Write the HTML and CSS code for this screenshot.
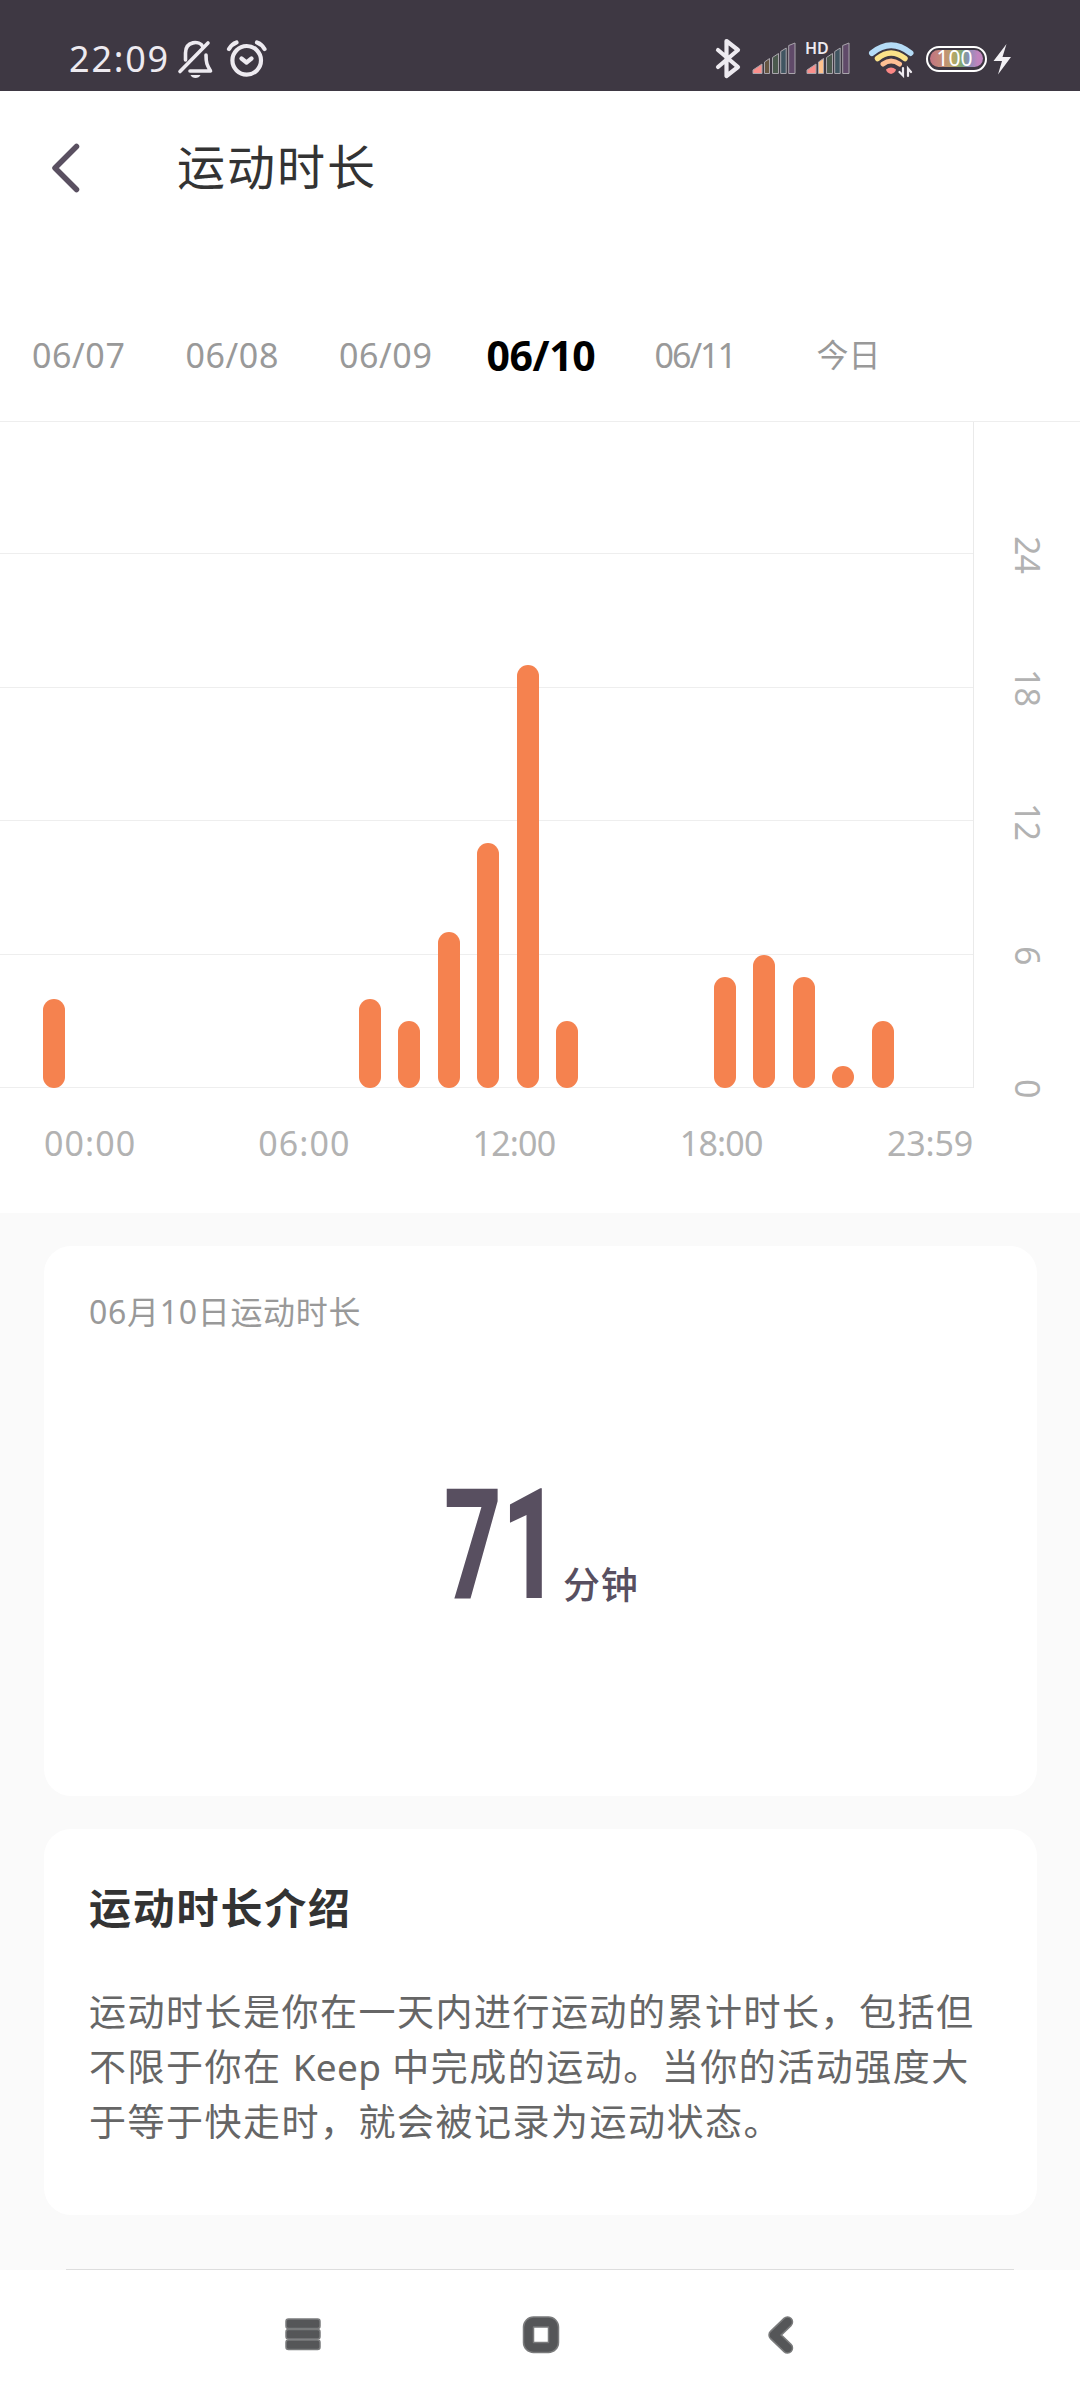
FILE: index.html
```html
<!DOCTYPE html>
<html lang="zh-CN">
<head>
<meta charset="utf-8">
<title>运动时长</title>
<link rel="stylesheet" href="styles.css">
</head>
<body>
<div class="status">
  <span class="clock">22:09</span>
  <svg class="bell" width="38" height="40" viewBox="177 39 38 40" fill="none" stroke="#edeaf0" stroke-width="3.6" stroke-linecap="round" stroke-linejoin="round">
    <path d="M185.500 60V53c0-12 14-13 17.500-6M206 55c0 8 1 10 4.500 16H190M180 71.500L208 43"/>
    <path d="M190.500 75h10c-1.500 4-8.500 4-10 0z" fill="#edeaf0" stroke="none"/>
  </svg>
  <svg class="alarm" width="42" height="40" viewBox="226 39 42 40" fill="none" stroke="#edeaf0" stroke-width="4.200" stroke-linecap="round" stroke-linejoin="round">
    <circle cx="246.700" cy="60.300" r="14.300"/>
    <path d="M241.500 58.500l5 4 5-4M229 49q3-5 7.500-6.500M264.500 49q-3-5-7.500-6.500"/>
  </svg>
  <svg class="bt" width="28" height="42" viewBox="714 38 28 42" fill="none" stroke="#edeaf0" stroke-width="4.200" stroke-linecap="round" stroke-linejoin="round">
    <path d="M718 50l20 17-11.500 9V41l11.500 9-20 17"/>
  </svg>
  <svg class="sig" width="44" height="34" viewBox="752 42 44 34" stroke="#a9a5ac" stroke-width="1">
    <path d="M753 73.500v-3.500l9-6v9.500z" fill="#fb8f8c"/>
    <path d="M764.500 73.500V62l5-3.500v15z" fill="#665643"/>
    <path d="M772.500 73.500V57.500l6-4v20z" fill="#4b594d"/>
    <path d="M780.700 73.500V51.500l5.500-3.500v25.500z" fill="#405561"/>
    <path d="M788.700 73.500V45.500l6.300-2.500v30.500z" fill="#604a69"/>
  </svg>
  <div class="sig2">
    <svg width="44" height="34" viewBox="752 42 44 34" stroke="#a9a5ac" stroke-width="1">
      <path d="M753 73.500v-3.500l9-6v9.500z" fill="#fb8f8c"/>
      <path d="M764.500 73.500V62l5-3.500v15z" fill="#ffc28d"/>
      <path d="M772.500 73.500V57.500l6-4v20z" fill="#4b594d"/>
      <path d="M780.700 73.500V51.500l5.500-3.500v25.500z" fill="#405561"/>
      <path d="M788.700 73.500V45.500l6.300-2.500v30.500z" fill="#604a69"/>
    </svg>
    <span class="hd">HD</span>
  </div>
  <svg class="wifi" width="48" height="38" viewBox="868 41 48 38" fill="none" stroke-linecap="round">
    <path d="M872 54q19-15.500 38.500 0" stroke="#b5dcf7" stroke-width="6"/>
    <path d="M877.500 59.500q13.500-11 27.500 0" stroke="#fbe389" stroke-width="5.500"/>
    <path d="M883 65q8-6 16.500 0" stroke="#ffc094" stroke-width="5"/>
    <path d="M886 70.500q5-4 10 0q-.5 3-5 4.500q-4.500-1.500-5-4.500z" fill="#fb8785"/>
    <path d="M903 69v7.500l-3.500-3.500M908 77v-7.500l3 3.500" stroke="#edeaf0" stroke-width="2.200"/>
  </svg>
  <div class="battery"><i></i><span>100</span></div>
  <svg class="bolt" width="20" height="32" viewBox="992 43 20 32"><path d="M1006.500 44L993.500 61h8.500l-4 13.500L1011 57h-8.500z" fill="#f3f1f5"/></svg>
</div>

<header class="header">
  <svg width="30" height="52" viewBox="50 142 30 52" fill="none" stroke="#5a5061" stroke-width="5.500" stroke-linecap="round" stroke-linejoin="round"><path d="M76.500 146.500L55 168l21.500 21.500"/></svg>
  <h1>运动时长</h1>
</header>

<nav class="days">
  <span>06/07</span><span>06/08</span><span>06/09</span><span class="on">06/10</span><span class="narrow">06/11</span><span class="today">今日</span>
</nav>

<section class="chart">
  <div class="plot-row">
    <div class="plot">
      <div class="lines"><i></i><i></i><i></i><i></i><i></i></div>
      <div class="bars">
        <b style="--v:4"></b><b></b><b></b><b></b><b></b><b></b><b></b><b></b>
        <b style="--v:4"></b><b style="--v:3"></b><b style="--v:7"></b><b style="--v:11"></b><b style="--v:19"></b><b style="--v:3"></b>
        <b></b><b></b><b></b>
        <b style="--v:5"></b><b style="--v:6"></b><b style="--v:5"></b><b style="--v:1"></b><b style="--v:3"></b>
      </div>
    </div>
    <div class="yaxis"><span>24</span><span>18</span><span>12</span><span>6</span><span>0</span></div>
  </div>
  <div class="xaxis"><span>00:00</span><span>06:00</span><span class="one">12:00</span><span class="one">18:00</span><span class="end">23:59</span></div>
</section>

<main class="content">
  <section class="card total">
    <div class="label">06月10日运动时长</div>
    <div class="value"><span class="num">71</span><span class="unit">分钟</span></div>
  </section>
  <section class="card intro">
    <h2>运动时长介绍</h2>
    <p>运动时长是你在一天内进行运动的累计时长，包括但<br>不限于你在 <span class="latin">Keep</span> 中完成的运动。当你的活动强度大<br>于等于快走时，就会被记录为运动状态。</p>
  </section>
</main>

<footer class="sysnav">
  <svg width="36" height="36" viewBox="285.500 2316 36 36" fill="#555658" stroke="#7a7b7c" stroke-width="1.500">
    <rect x="286.500" y="2319" width="34" height="9.500" rx="2.500"/><rect x="286.500" y="2329.500" width="34" height="9.500" rx="2.500"/><rect x="286.500" y="2340" width="34" height="9.500" rx="2.500"/>
  </svg>
  <svg class="home" width="38" height="40" viewBox="522 2315 38 40" fill="none">
    <rect x="528.500" y="2322" width="25" height="25.500" rx="5" stroke="#7a7b7c" stroke-width="11.500"/>
    <rect x="528.500" y="2322" width="25" height="25.500" rx="5" stroke="#555658" stroke-width="8.500"/>
  </svg>
  <svg width="28" height="40" viewBox="767 2315 28 40" fill="none" stroke-linecap="round" stroke-linejoin="round">
    <path d="M787.500 2322L774 2335l13.500 13" stroke="#7a7b7c" stroke-width="11.500"/>
    <path d="M787.500 2322L774 2335l13.500 13" stroke="#555658" stroke-width="8.500"/>
  </svg>
</footer>
</body>
</html>
```
FILE: styles.css
```css
* { box-sizing: border-box; }
body {
  margin: 0;
  width: 1080px;
  height: 2400px;
  overflow: hidden;
  background: #fff;
  color: #333;
  font-family: "Noto Sans", "Noto Sans CJK SC", sans-serif;
  display: flex;
  flex-direction: column;
}
svg { display: block; flex: none; }
h1, h2, p { margin: 0; font-weight: 400; }

.status {
  height: 91px;
  flex: none;
  background: #3e3843;
  color: #edeaf0;
  display: flex;
  align-items: center;
  padding: 26px 0 0 69px;
}
.clock { width: 108px; font-size: 36px; line-height: 40px; letter-spacing: 1.8px; }
.alarm { margin-left: 11px; }
.bt { margin-left: 446px; }
.sig { margin-left: 10px; }
.sig2 { position: relative; margin-left: 10px; }
.hd {
  position: absolute;
  left: -1px;
  top: -4px;
  font-size: 16px;
  line-height: 20px;
  font-weight: 600;
}
.wifi { margin-left: 18px; }
.battery {
  width: 61px;
  height: 26px;
  margin-left: 10px;
  border: 2.500px solid #fff;
  border-radius: 13px;
  padding: 2px;
  display: grid;
  place-items: center;
  color: #fff;
}
.battery i, .battery span { grid-area: 1 / 1; }
.battery i {
  width: 100%;
  height: 17px;
  border-radius: 9px;
  background: linear-gradient(90deg, #c27482, #c29074 28%, #b5a864 45%, #7da777 60%, #8791b9 72%, #c083bd 90%);
}
.battery span { margin: -8px 4px -6px 0; font-size: 21px; line-height: 28px; }
.bolt { margin-left: 5px; }

.header { height: 180px; flex: none; display: flex; padding: 51px 0 0 50px; }
.header h1 {
  margin: -5px 0 0 97px;
  font-size: 48px;
  line-height: 60px;
  letter-spacing: 2px;
}

.days {
  height: 151px;
  flex: none;
  display: flex;
  align-items: center;
  padding: 18px 0 0 32px;
  border-bottom: 1px solid #eee;
  color: #999;
  font-size: 34px;
  line-height: 50px;
  white-space: nowrap;
}
.days span { width: 153.500px; letter-spacing: .6px; }
.days .on { width: 168px; margin-left: -6px; color: #000; font-size: 41px; font-weight: 700; letter-spacing: -.4px; }
.days .narrow { width: 162px; letter-spacing: -2px; }
.days .today { font-size: 32px; letter-spacing: 0; }

.chart { height: 791px; flex: none; }
.plot-row { height: 666px; display: flex; }
.plot { width: 974px; flex: none; border-right: 1px solid #eaeaea; display: grid; grid-template-rows: 666px; }
.lines, .bars { grid-area: 1 / 1; }
.lines { display: flex; flex-direction: column; justify-content: flex-end; }
.lines i { flex: none; height: 133.500px; border-bottom: 1px solid #eee; }
.lines i:first-child { height: 132px; }
.bars { display: flex; align-items: flex-end; gap: 17.470px; padding-left: 43px; }
.bars b { width: 22px; flex: none; height: calc(var(--v, 0) * 22.250px); border-radius: 11px; background: #f5824f; }
.yaxis {
  padding-left: 1px;
  margin-bottom: -67px;
  display: flex;
  flex-direction: column;
  justify-content: flex-end;
  color: #b2b2b2;
  font-size: 34px;
}
.yaxis span {
  height: 133.500px;
  writing-mode: vertical-rl;
  line-height: 106px;
  text-align: center;
  letter-spacing: -1px;
}
.xaxis {
  display: flex;
  justify-content: space-between;
  width: 973px;
  padding: 30px 0 0 44px;
  color: #b2b2b2;
  font-size: 34px;
  line-height: 50px;
}
.xaxis span { width: 91px; letter-spacing: 1.1px; }
.xaxis .one { width: 84px; letter-spacing: -.8px; }
.xaxis .end { width: 86px; letter-spacing: -.2px; }

.content {
  height: 1057px;
  flex: none;
  background: #fafafa;
  padding: 33px 43.500px 0 44px;
  display: flex;
  flex-direction: column;
  gap: 33px;
}
.card { background: #fff; border-radius: 27px; padding: 0 45px; }
.total { height: 550px; }
.label { padding-top: 42px; font-size: 32px; line-height: 48px; letter-spacing: .7px; color: #999; }
.value { display: flex; padding: 123px 0 0 355px; color: #584f60; }
.num {
  width: 119px;
  margin-top: -3px;
  font-family: Roboto, sans-serif;
  font-weight: 800;
  font-size: 154px;
  line-height: 180px;
  transform: scaleX(.65);
  transform-origin: 0 0;
}
.unit { margin-top: 98px; font-size: 37px; line-height: 56px; font-weight: 500; letter-spacing: .8px; }
.intro { height: 386px; }
.intro h2 { padding-top: 47px; font-size: 42px; line-height: 64px; font-weight: 700; letter-spacing: 1.8px; }
.intro p { margin-top: 44px; font-size: 37px; line-height: 55px; letter-spacing: 1.500px; color: #666; white-space: nowrap; }
.latin { letter-spacing: .3px; }

.sysnav {
  flex: 1;
  margin: -1px 66px 0;
  border-top: 1px solid #ddd;
  display: flex;
  justify-content: space-between;
  padding: 45px 219px 0 219px;
}
.sysnav svg:first-child { margin-top: 1px; }
.home { margin-right: 7px; }
```
